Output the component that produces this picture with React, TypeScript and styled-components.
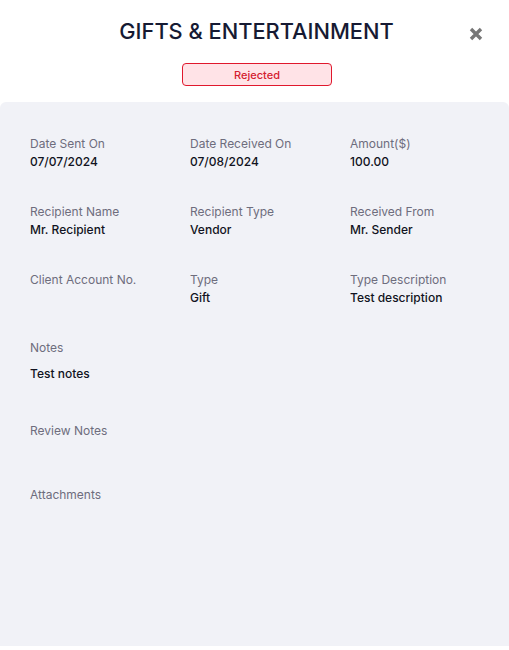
import { createGlobalStyle, styled } from 'styled-components';

const GlobalStyle = createGlobalStyle`
  html, body {
    margin: 0;
    padding: 0;
    background: #ffffff;
    font-family: Inter, "Noto Sans", sans-serif;
  }
`;

const Modal = styled.div`
  width: 509px;
  height: 650px;
  display: flex;
  flex-direction: column;
  background: #fff;
`;

const Header = styled.header`
  position: relative;
  display: flex;
  flex-direction: column;
  align-items: center;
  padding-top: 17px;
  height: 86px;
  box-sizing: border-box;
`;

const Title = styled.h1`
  margin: 0 0 0 4px;
  font-size: 21.8px;
  font-weight: 500;
  line-height: 28px;
  color: #161a33;
`;

const CloseButton = styled.button`
  position: absolute;
  top: 26px;
  right: 25px;
  width: 16px;
  height: 16px;
  padding: 0;
  border: none;
  background: none;
  cursor: pointer;
  display: flex;
  align-items: center;
  justify-content: center;
`;

const StatusBadge = styled.div`
  margin-top: 18px;
  margin-left: 5px;
  width: 150px;
  height: 24px;
  box-sizing: border-box;
  border: 1px solid #e0182d;
  border-radius: 4px;
  background: #ffe3e7;
  color: #d4202f;
  font-size: 11px;
  font-weight: 500;
  display: flex;
  align-items: center;
  justify-content: center;
`;

const Body = styled.section`
  flex: 1;
  margin-top: 16px;
  margin-bottom: 4px;
  background: #f1f2f7;
  border-radius: 6px 6px 0 0;
  padding: 34px 30px 0;
`;

const Grid = styled.div`
  display: grid;
  grid-template-columns: 160px 160px 160px;
  row-gap: 34px;
`;

const Field = styled.div<{ $gap?: number }>`
  display: flex;
  flex-direction: column;
  gap: ${p => p.$gap ?? 2}px;
  min-height: 34px;
`;

const Label = styled.span`
  font-size: 12px;
  line-height: 16px;
  color: #6e6d7d;
`;

const Value = styled.span`
  font-size: 12px;
  line-height: 16px;
  font-weight: 500;
  color: #111322;
`;

const Section = styled.div<{ $top: number }>`
  margin-top: ${p => p.$top}px;
`;

const rows = [
  [
    ['Date Sent On', '07/07/2024'],
    ['Date Received On', '07/08/2024'],
    ['Amount($)', '100.00'],
  ],
  [
    ['Recipient Name', 'Mr. Recipient'],
    ['Recipient Type', 'Vendor'],
    ['Received From', 'Mr. Sender'],
  ],
  [
    ['Client Account No.', ''],
    ['Type', 'Gift'],
    ['Type Description', 'Test description'],
  ],
];

export default function App() {
  return (
    <>
      <GlobalStyle />
      <Modal>
        <Header>
          <Title>GIFTS &amp; ENTERTAINMENT</Title>
          <CloseButton aria-label="Close">
            <svg width="14" height="14" viewBox="0 0 14 14">
              <path d="M2 2 L12 12 M12 2 L2 12" stroke="#777" strokeWidth="3.4" strokeLinecap="butt" />
            </svg>
          </CloseButton>
          <StatusBadge>Rejected</StatusBadge>
        </Header>
        <Body>
          <Grid>
            {rows.flat().map(([label, value]) => (
              <Field key={label}>
                <Label>{label}</Label>
                {value && <Value>{value}</Value>}
              </Field>
            ))}
          </Grid>
          <Section $top={34}>
            <Field $gap={10}>
              <Label>Notes</Label>
              <Value>Test notes</Value>
            </Field>
          </Section>
          <Section $top={37}>
            <Label>Review Notes</Label>
          </Section>
          <Section $top={44}>
            <Label>Attachments</Label>
          </Section>
        </Body>
      </Modal>
    </>
  );
}
